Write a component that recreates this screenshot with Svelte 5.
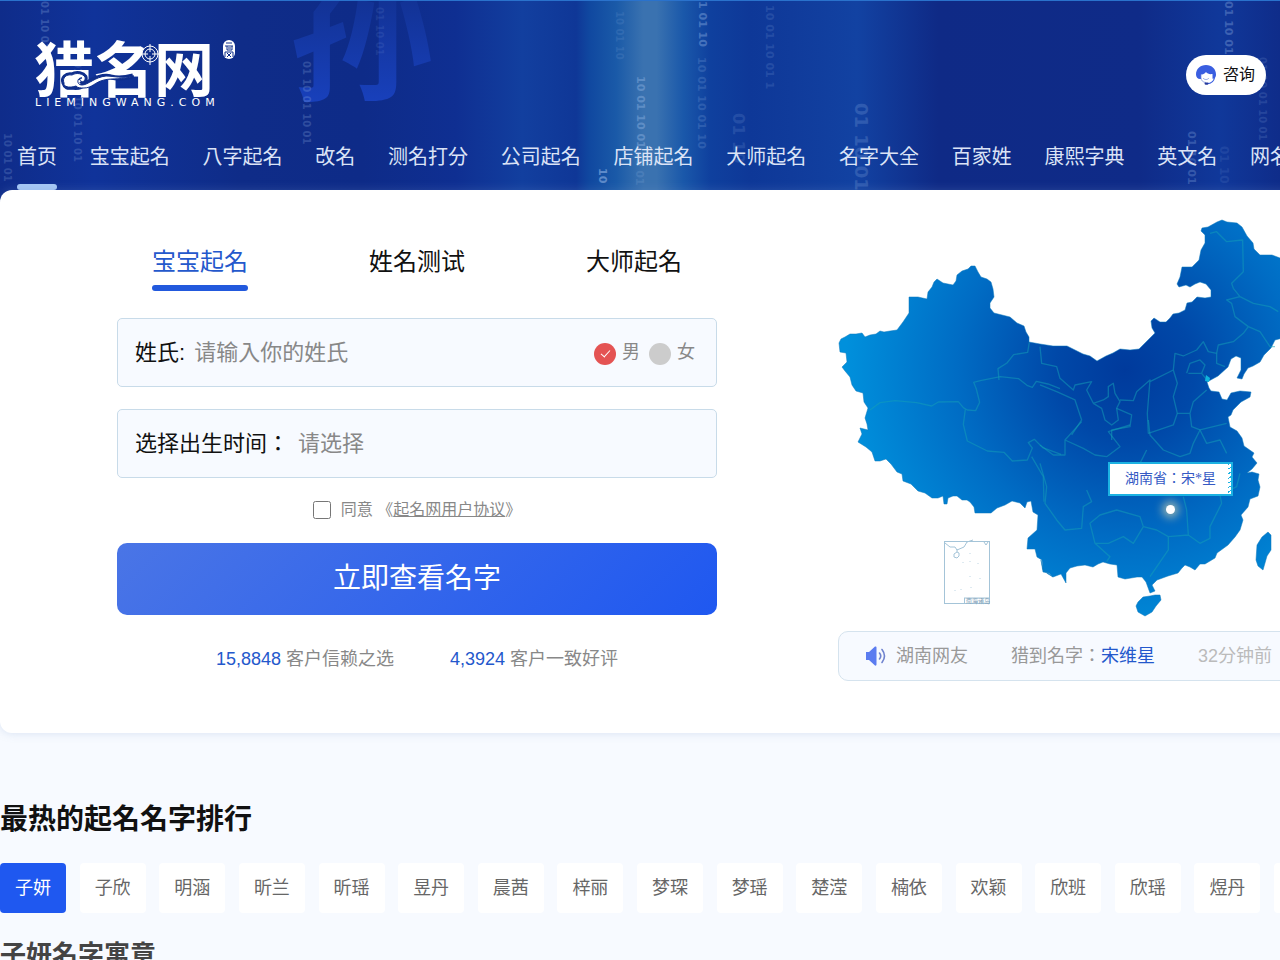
<script>
    const nav = ['首页', '宝宝起名', '八字起名', '改名', '测名打分', '公司起名', '店铺起名', '大师起名', '名字大全', '百家姓', '康熙字典', '英文名', '网名大全'];
    const tabs = ['宝宝起名', '姓名测试', '大师起名'];
    const names = ['子妍', '子欣', '明涵', '昕兰', '昕瑶', '昱丹', '晨茜', '梓丽', '梦琛', '梦瑶', '楚滢', '楠依', '欢颖', '欣班', '欣瑶', '煜丹', '熙涵'];

    // falling digits behind the header
    const digits = [
        { x: 41, y: 0, size: 10, o: 0.25, t: '01 10 01 0' },
        { x: 74, y: 60, size: 10, o: 0.2, t: '01 01 10 01 10 01' },
        { x: 4, y: 132, size: 10, o: 0.2, t: '10 01 01' },
        { x: 303, y: 60, size: 10, o: 0.22, t: '01 10 01 10 01' },
        { x: 376, y: 6, size: 10, o: 0.1, t: '01 10 01' },
        { x: 599, y: 167, size: 11, o: 0.5, t: '10' },
        { x: 616, y: 10, size: 10, o: 0.12, t: '10 01 10' },
        { x: 637, y: 75, size: 11, o: 0.35, t: '10 01 10 01' },
        { x: 636, y: 150, size: 11, o: 0.15, t: '10 01' },
        { x: 699, y: 0, size: 11, o: 0.35, t: '1 01 10' },
        { x: 698, y: 56, size: 11, o: 0.18, t: '10 01 10 01 10' },
        { x: 733, y: 112, size: 16, o: 0.14, t: '01 10' },
        { x: 766, y: 4, size: 11, o: 0.14, t: '10 01 10 01 1' },
        { x: 855, y: 102, size: 18, o: 0.2, t: '01 10 01' },
        { x: 1188, y: 130, size: 11, o: 0.25, t: '01 10 01' },
        { x: 1225, y: 0, size: 11, o: 0.3, t: '01 10 01' },
        { x: 1259, y: 56, size: 10, o: 0.15, t: '01 10 01 10 01' },
        { x: 1220, y: 145, size: 12, o: 0.1, t: '01 10' }
    ];

    let tab = $state(0);
    let picked = $state(0);
    let surname = $state('');
    let sex = $state('male');
    let agree = $state(false);
</script>

<div class="page">
    <header>
        <svg class="deco" width="1340" height="202" aria-hidden="true">
            <defs>
                <linearGradient id="sun" x1="0" y1="0" x2="0" y2="1">
                    <stop offset=".3" stop-color="#11308f" />
                    <stop offset="1" stop-color="#1a44c6" />
                </linearGradient>
            </defs>
            <text class="big" x="289" y="88" fill="url(#sun)">孙</text>
            {#each digits as d}
                <text transform="translate({d.x} {d.y}) rotate(90)" font-size={d.size} opacity={d.o}>{d.t}</text>
            {/each}
        </svg>
        <a class="logo" href="#home" aria-label="猎名网">
            <svg width="206" height="72" viewBox="34 38 206 72">
                <text class="logo-name" x="34" y="92">猎名网</text>
                <text class="logo-url" x="35" y="106">LIEMINGWANG.COM</text>
                <path d="M64 83c-2-5 2-9 8-8 5-3 11-1 13 2 1 3-2 6-4 4m-17 2c1 4 4 5 8 4 6 2 11-1 15-4 7-5 17-8 24-6 8 2 14 1 22-1" fill="none" stroke="#0f2e8b" stroke-width="5" />
                <path d="M64 83c-2-5 2-9 8-8 5-3 11-1 13 2 1 3-2 6-4 4-2-1-1-3 1-3-5-1-6 7 0 7 6 0 13-8 24-9 8 0 16 3 28 0-11 4-22 2-30 4-9 2-12 8-20 8-4 0-6 0-8-2-6 2-10 1-12-1z" fill="#fff" stroke="#0f2e8b" stroke-width="1" />
                <circle cx="150" cy="54" r="8" fill="#0f2e8b" stroke="#fff" stroke-width="1" />
                <circle cx="150" cy="54" r="5" fill="none" stroke="#fff" stroke-width="1" />
                <path d="M150 44v8m0 4v9m-10-11h8m4 0h9" stroke="#fff" stroke-width="1" />
                <rect x="223" y="40" width="12" height="19" rx="6" fill="#fff" />
                <path d="M226 43h6m-7 3h8m-6 0v4h5v-4m-4 2h3m-6 4h8v5m-8-5v5m2-4l4 4m0-4l-4 4" fill="none" stroke="#0f2e8b" stroke-width="1" />
            </svg>
        </a>
        <nav>
            {#each nav as item, i}
                <a href="#nav{i}" class:active={i === 0}>{item}</a>
            {/each}
        </nav>
    </header>

    <button class="consult">
        <svg width="20" height="20" viewBox="0 0 20 20" aria-hidden="true">
            <path d="M0 9.500C0 4 4.200 0 10 0s10 4 10 9.500c0 2-.7 3.500-2 4l-1.500.2V9c-3 .5-5-.2-6.500-2C8.500 9 6.500 9.500 5 9.500V14C2 14.500 0 12.500 0 9.500z" fill="#3a5ee0" />
            <path d="M5 9.500v3c0 3 2 5 5 5M7 13c1.500 2 4.500 2 6 0" fill="none" stroke="#7088d8" stroke-width=".7" />
            <path d="M18.500 12.500c-.5 3.500-3.500 6-7.500 6.200" fill="none" stroke="#3a5ee0" stroke-width="1.200" />
            <rect x="8.500" y="17.500" width="4" height="2.200" rx="1.100" fill="#263a9c" />
        </svg>
        咨询
    </button>

    <main>
        <section class="card">
            <form onsubmit={(e) => e.preventDefault()}>
                <div class="tabs">
                    {#each tabs as t, i}
                        <button type="button" class:active={tab === i} onclick={() => (tab = i)}>{t}</button>
                    {/each}
                </div>
                <div class="field">
                    <label for="surname">姓氏:</label>
                    <input id="surname" type="text" placeholder="请输入你的姓氏" bind:value={surname} />
                    <div class="sex">
                        <label><input type="radio" name="sex" value="male" bind:group={sex} /><span>男</span></label>
                        <label><input type="radio" name="sex" value="female" bind:group={sex} /><span>女</span></label>
                    </div>
                </div>
                <div class="field">
                    <label for="birth">选择出生时间：</label>
                    <input id="birth" type="text" placeholder="请选择" readonly />
                </div>
                <div class="agree">
                    <input id="agree" type="checkbox" bind:checked={agree} />
                    <span><label for="agree">同意</label> 《<a href="#agreement">起名网用户协议</a>》</span>
                </div>
                <button class="submit">立即查看名字</button>
                <div class="stats">
                    <span><b>15,8848</b> 客户信赖之选</span>
                    <span><b>4,3924</b> 客户一致好评</span>
                </div>
            </form>

            <div class="side">
                <div class="map">
                    <svg width="502" height="405" viewBox="838 215 502 405" role="img" aria-label="中国地图">
                        <defs>
                            <radialGradient id="sea" gradientUnits="userSpaceOnUse" cx="1125" cy="370" r="280">
                                <stop offset="0" stop-color="#003a9c" />
                                <stop offset=".25" stop-color="#0048a8" />
                                <stop offset=".6" stop-color="#006cc4" />
                                <stop offset="1" stop-color="#0090dc" />
                            </radialGradient>
                        </defs>
                        <g fill="url(#sea)" stroke="#0a78bc" stroke-opacity=".5" stroke-linejoin="round">
                            <polygon points="839,343 841,339 845,337 850,334 856,334 862,333 865,337 870,335 876,334 880,331 884,332 890,331 897,330 903,322 909,313 909,297 918,297 927,299 928,292 932,287 934,282 937,279 943,283 953,285 956,281 957,275 962,271 968,269 971,266 975,266 978,272 981,277 987,279 991,282 993,289 994,297 990,303 990,308 994,313 1002,315 1010,317 1017,323 1024,326 1026,332 1029,337 1029,342 1040,344 1053,346 1067,346 1075,350 1083,354 1090,356 1097,361 1106,356 1113,353 1120,349 1130,350 1139,349 1147,341 1155,333 1152,328 1151,321 1154,318 1160,322 1166,322 1170,318 1173,314 1179,313 1185,310 1187,303 1192,302 1197,297 1205,298 1211,297 1211,290 1206,284 1200,282 1195,284 1190,287 1186,285 1179,287 1177,284 1180,277 1182,267 1192,267 1199,260 1201,250 1205,243 1205,235 1201,231 1202,228 1208,227 1217,222 1222,220 1227,222 1237,223 1242,227 1247,236 1253,243 1254,249 1260,255 1272,255 1280,258 1300,262 1318,272 1335,290 1331,318 1308,330 1290,336 1275,340 1271,348 1264,355 1260,362 1253,366 1248,368 1244,374 1242,379 1237,378 1241,370 1241,358 1236,356 1231,359 1228,367 1218,376 1207,382 1209,388 1211,391 1219,392 1222,399 1227,400 1231,393 1240,391 1251,392 1250,397 1241,402 1233,410 1231,415 1228,417 1230,427 1237,431 1242,438 1244,446 1254,453 1252,457 1257,463 1252,469 1247,473 1252,472 1259,474 1258,480 1260,487 1258,496 1250,499 1248,507 1241,515 1243,520 1240,530 1235,537 1228,545 1217,553 1215,558 1205,564 1200,564 1195,570 1190,567 1185,565 1182,568 1178,573 1168,576 1157,580 1152,585 1155,591 1150,593 1146,582 1142,577 1137,577 1125,579 1118,577 1117,565 1110,564 1103,562 1098,564 1093,567 1085,565 1077,566 1070,568 1066,573 1066,583 1061,574 1053,577 1049,573 1043,572 1041,560 1043,569 1053,577 1048,574 1043,570 1042,560 1037,557 1035,549 1027,549 1028,538 1037,530 1038,515 1033,512 1031,501 1027,502 1025,508 1020,503 1012,501 1005,505 997,508 991,513 975,513 974,507 970,502 967,500 962,500 957,496 953,496 948,498 947,504 944,504 943,496 938,498 932,498 925,493 918,491 911,484 903,481 902,474 897,472 891,464 886,459 880,461 875,461 872,452 866,447 858,442 862,434 860,428 868,430 867,424 865,418 868,408 864,402 863,393 856,391 852,385 850,377 845,371 842,367 847,362 846,353 840,352" />
                            <polygon points="1268,532 1271,535 1271,550 1267,556 1263,570 1258,566 1256,560 1257,545 1262,537" />
                            <polygon points="1138,602 1143,597 1150,596 1155,595 1160,595 1161,600 1156,606 1152,612 1145,616 1138,612 1136,606" />
                        </g>
                        <g fill="none" stroke="#14a2b8" stroke-opacity=".5" stroke-linejoin="round" stroke-width="4">
                            <g transform="translate(820 200) scale(.3333)">
                                <path d="M150 630l30-22 45-6 65 6 45 10 20-12 60-1 15 18 12 7 25 2 12-25-10-40-8-20 20-5 60-12 55 6 25 20 16 6 12-18 35 8 36 14" />
                                <path d="M436 628l-6 45 12 50 60 30 50 4 25 26 45-3 15-36-12-16 18-10 25 25 55 20M635 770l35 60 2 75M628 427l-5 30-42 7-20 25-27 17 3 34" />
                            </g>
                            <g transform="translate(1040 200) scale(.3333)">
                                <path d="M0 440l5 50 45 10 10 35 40 35 5-15 50-10-15 25 20 40 30-10 15-10v-30l15-10 5 30 15 25-10 20 5 35-20 15-20-15-10-35-25-15" />
                                <path d="M0 555l50 20 55 25 20 60-30 45M240 600l40 2 10-27 40-35-8 100 3 60 75-25 12-35-12-50 12-40-12-40-70 35M400 510l5-50 25 8 40-18 20-25 15 30 25 5v30l25 10" />
                                <path d="M530 460l5-25 45-10 30-25 15-20-40-30-10-40-15-10 40-10 40 20 50 10 25 15M600 290l-20-25-5-15 35-35-2-95-48 5-30-30-20 5M625 380l35 15 30 45 15 0" />
                                <path d="M440 520l10-30 30-10 15 15-10 25-40 0M485 520l20 25M412 640l38 0 10-35 40-35M450 640l5 40 25 10 40-10 40-10M230 625l45 20-5 35-55 10v30" />
                            </g>
                            <g transform="translate(1040 420) scale(.3333)">
                                <path d="M125 5l-50 55v45h-35L0 75M75 60l55 25 35 20 35 5 40-30-35-45 65-20" />
                                <path d="M325 0l5 45 40 45 50 20 30-10 10-30 20-40 20 40 40-10 20 40M0 130l20 70-5 50 35 50 25 30 50-5 5-65 25-15-15-35" />
                                <path d="M165 370l-15-60 30-25 50-15 70 20 10 30-30 50-30-20-45 20h-40l45 40-10 15M310 320l40 10 35 20 60-5-5-75-10-40M385 350v40l-55 80M445 345l35 25 30-15v-35l35-70-5-25 50-25 10-40M320 90l-20 40" />
                            </g>
                        </g>
                        <path d="M1206 375l4 3-1 4-4-1z" fill="#10b4dc" />
                        <g fill="none" stroke="#a4c4d8" stroke-width="1">
                            <rect x="944.500" y="541.500" width="45" height="62" />
                            <path d="M945 543l5 4 5 0 2 3 7-3 3-5 6-2M984 542l2 3 2-3M957 549v3l-3 2v3l3 1 2-2v-3l-2-1M964 598h25M964.500 598v6" />
                            <path d="M963 562v1m7-2v1m8 1v1m-8 12v1m10 1v1m-9 8v1m-10 1v1m-6 0v1m15-38v1m-3 46v1" stroke-opacity=".7" />
                        </g>
                        <text class="isles" x="966" y="603">南海诸岛</text>
                    </svg>
                    <span class="tip">湖南省：宋*星</span>
                    <i class="dot"></i>
                </div>
                <div class="news">
                    <svg width="22" height="20" viewBox="0 0 22 20" aria-hidden="true">
                        <path d="M1 6h3l6-5.500q1.500-.5 1.500 1v17q0 1.500-1.500 1L4 14H1z" fill="#5b7cf0" />
                        <path d="M14.500 7q2.500 3 0 6M17 3.500q5 6.500 0 13" fill="none" stroke="#6f83cf" stroke-width="1.600" stroke-linecap="round" />
                    </svg>
                    <span class="who">湖南网友</span>
                    <span class="got">猎到名字：<b>宋维星</b></span>
                    <span class="when">32分钟前</span>
                </div>
            </div>
        </section>

        <section class="rank">
            <h2>最热的起名名字排行</h2>
            <div class="names">
                {#each names as n, i}
                    <button class:active={picked === i} onclick={() => (picked = i)}>{n}</button>
                {/each}
            </div>
            <h3>{names[picked]}名字寓意</h3>
        </section>
    </main>
</div>

<style>
    :global(body){
        background: #f7faff;
        overflow-x: hidden;
    }

    .page{
        min-width: 1340px;
        font-family: "Liberation Sans", "Noto Sans CJK JP", sans-serif;
        line-height: 24px;
        color: #111;
    }

    button, input{
        font-family: inherit;
        line-height: inherit;
        border: 0;
        padding: 0;
        margin: 0;
        background: none;
        color: inherit;
    }

    button{
        cursor: pointer;
    }

    b{
        font-weight: normal;
        color: #2458cc;
    }

    header{
        position: relative;
        box-sizing: border-box;
        height: 202px;
        padding-top: 37px;
        border-top: 1px solid #2a72cc;
        background: linear-gradient(90deg, #0f2c8a 0%, #10339a 7%, #0f2c88 18%, #0e2b88 27%, #0f2f92 34%, #123f9f 39%, #0f3797 43%, #1048a0 44%, #1a5aa8 46%, #3a72b0 48%, #3a72b0 49%, #1a58aa 51%, #0f409e 53%, #0e3898 56%, #103b9b 59%, #1242a2 64%, #0f2a86 70%, #0f2b88 85%, #10389a 91%, #0f2b88 96%, #0f2b88 100%);
    }

    .deco{
        position: absolute;
        top: 0;
        left: 0;
        fill: #a4c4f0;
        font-family: "DejaVu Sans", sans-serif;
        font-weight: bold;
    }

    .big{
        font-family: "Noto Sans CJK SC", sans-serif;
        font-size: 145px;
    }

    .logo{
        position: relative;
        display: block;
        width: 206px;
        height: 72px;
        margin-left: 34px;
        fill: #fff;
    }

    .logo svg{
        display: block;
        overflow: visible;
    }

    .logo-name{
        font-family: "Noto Sans CJK SC", sans-serif;
        font-size: 60px;
        font-weight: bold;
    }

    .logo-url{
        font-family: "DejaVu Sans", sans-serif;
        font-size: 11px;
        letter-spacing: 5px;
    }

    nav{
        position: relative;
        display: flex;
        justify-content: space-between;
        max-width: 1313px;
        margin-top: 32px;
        padding: 0 10px 0 17px;
    }

    nav a{
        font-size: 20px;
        line-height: 30px;
        color: #dbe3f6;
        text-decoration: none;
        white-space: nowrap;
    }

    nav a.active::after{
        content: "";
        display: block;
        height: 6px;
        margin-top: 12px;
        border-radius: 3px;
        background: #a6c8f6;
    }

    .consult{
        position: fixed;
        top: 55px;
        right: 14px;
        z-index: 9;
        display: flex;
        align-items: center;
        gap: 7px;
        height: 40px;
        padding: 0 11px 0 10px;
        border-radius: 20px;
        background: #fff;
        font-size: 16px;
    }

    main{
        position: relative;
        max-width: 1340px;
        margin: -12px auto 0;
    }

    .card{
        display: flex;
        gap: 121px;
        padding: 0 0 52px 117px;
        border-radius: 12px;
        background: #fff;
        box-shadow: 0 0 10px rgba(120, 150, 200, 0.25);
    }

    form{
        flex: none;
        width: 600px;
    }

    .tabs{
        display: flex;
        justify-content: space-between;
        align-items: flex-start;
        padding: 54px 35px 0;
        margin-bottom: 27px;
    }

    .tabs button{
        font-size: 24px;
        line-height: 36px;
    }

    .tabs button::after{
        content: "";
        display: block;
        height: 6px;
        margin-top: 5px;
        border-radius: 3px;
    }

    .tabs .active{
        color: #2458cc;
    }

    .tabs .active::after{
        background: #2259dd;
    }

    .field{
        display: flex;
        align-items: center;
        box-sizing: border-box;
        height: 69px;
        padding: 0 21px 0 17px;
        border: 1px solid #c8dbe9;
        border-radius: 5px;
        background: #f7faff;
        font-size: 22px;
    }

    .field + .field{
        margin-top: 22px;
    }

    .field > input{
        flex: 1;
        min-width: 0;
        height: 44px;
        margin-left: 9px;
        font-size: 22px;
        outline: none;
    }

    .field > input::placeholder{
        color: #888;
    }

    .sex{
        display: flex;
        gap: 9px;
        font-size: 18px;
        line-height: 22px;
        color: #888;
    }

    .sex label{
        display: flex;
        align-items: flex-end;
        gap: 6px;
    }

    .sex span{
        padding-bottom: 2px;
    }

    .sex input{
        appearance: none;
        width: 22px;
        height: 22px;
        border-radius: 50%;
        background: #ccc;
    }

    .sex input:checked{
        display: grid;
        place-items: center;
        background: #e45353;
    }

    .sex input:checked::before{
        content: "";
        width: 8px;
        height: 4px;
        margin-bottom: 3px;
        border-left: 1px solid #fff;
        border-bottom: 1px solid #fff;
        transform: rotate(-48deg);
    }

    .agree{
        display: flex;
        justify-content: center;
        align-items: center;
        gap: 10px;
        height: 24px;
        margin: 20px 0 21px;
        font-size: 16px;
        color: #888;
    }

    .agree input{
        width: 18px;
        height: 18px;
    }

    .agree a{
        color: inherit;
    }

    .submit{
        display: block;
        width: 100%;
        height: 72px;
        border-radius: 10px;
        background: linear-gradient(135deg, #4a75e6, #1f58f0);
        color: #fff;
        font-size: 28px;
    }

    .stats{
        display: flex;
        justify-content: center;
        gap: 56px;
        margin-top: 32px;
        font-size: 18px;
        color: #888;
    }

    .side{
        flex: 1;
        min-width: 0;
        padding-top: 25px;
    }

    .map{
        position: relative;
        margin-bottom: 11px;
    }

    .map svg{
        display: block;
    }

    .isles{
        font-size: 6px;
        fill: #7f9fb8;
    }

    .tip{
        position: absolute;
        top: 247px;
        left: 270px;
        padding: 0 15px;
        border: 2px solid #1cb2e2;
        background: repeating-linear-gradient(150deg, #1cb2e2 0 1px, #fff 1px 4px) right / 3px 100% no-repeat #fff;
        font-family: "Liberation Serif", "Noto Sans CJK JP", serif;
        font-size: 14px;
        line-height: 30px;
        color: #3559c4;
        white-space: nowrap;
    }

    .dot{
        position: absolute;
        top: 290px;
        left: 328px;
        width: 9px;
        height: 9px;
        border-radius: 50%;
        background: #fff;
        box-shadow: 0 0 8px 4px rgba(235, 225, 170, 0.6);
    }

    .news{
        display: flex;
        align-items: center;
        box-sizing: border-box;
        height: 50px;
        padding-left: 26px;
        border: 1px solid #d5e3ee;
        border-radius: 10px;
        background: #f7faff;
        font-size: 18px;
        color: #999;
        white-space: nowrap;
    }

    .who{
        margin-left: 9px;
    }

    .got, .when{
        margin-left: 43px;
    }

    .when{
        color: #bbb;
    }

    h2, h3{
        margin: 0;
    }

    h2{
        padding-top: 66px;
        font-size: 28px;
        line-height: 42px;
    }

    .names{
        display: flex;
        justify-content: space-between;
        margin: 22px 0;
    }

    .names button{
        height: 50px;
        padding: 0 15px;
        border-radius: 4px;
        background: #fff;
        color: #666;
        font-size: 18px;
        white-space: nowrap;
    }

    .names .active{
        background: #1f58f0;
        color: #fff;
    }

    h3{
        font-size: 26px;
        line-height: 40px;
        color: #444;
    }
</style>
